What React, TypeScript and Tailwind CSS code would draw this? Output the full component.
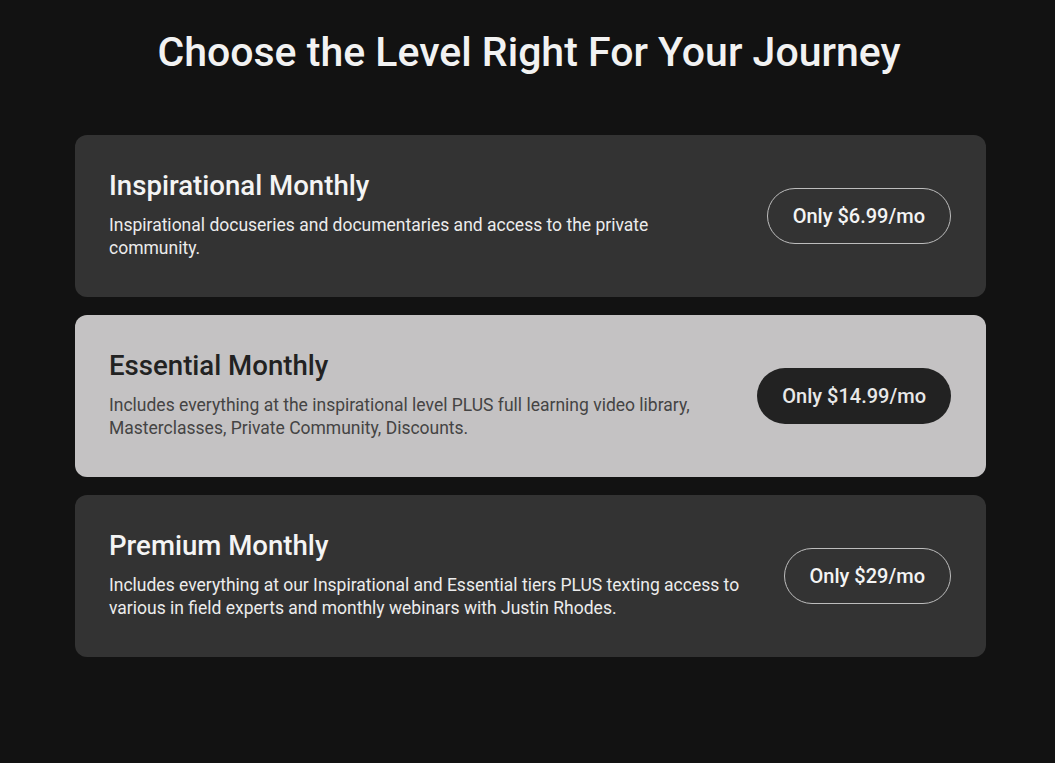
import React from "react";

interface Plan {
  name: string;
  description: string;
  price: string;
  highlighted?: boolean;
}

const plans: Plan[] = [
  {
    name: "Inspirational Monthly",
    description:
      "Inspirational docuseries and documentaries and access to the private community.",
    price: "Only $6.99/mo",
  },
  {
    name: "Essential Monthly",
    description:
      "Includes everything at the inspirational level PLUS full learning video library, Masterclasses, Private Community, Discounts.",
    price: "Only $14.99/mo",
    highlighted: true,
  },
  {
    name: "Premium Monthly",
    description:
      "Includes everything at our Inspirational and Essential tiers PLUS texting access to various in field experts and monthly webinars with Justin Rhodes.",
    price: "Only $29/mo",
  },
];

export default function App() {
  return (
    <div className="min-h-[763px] w-full bg-[#121212] pt-[28px] pb-[106px] font-['Roboto',sans-serif]">
      <h1 className="ml-[3px] text-center text-[41px] leading-[48px] font-medium text-[#f2f2f2]">
        Choose the Level Right For Your Journey
      </h1>
      <div className="ml-[75px] mt-[59px] flex w-[911px] flex-col gap-[18px]">
        {plans.map((p) => (
          <div
            key={p.name}
            className={
              "flex h-[162px] items-center gap-11 rounded-xl pl-[34px] pr-[35px] " +
              (p.highlighted ? "bg-[#c4c2c3]" : "bg-[#333333]")
            }
          >
            <div className="flex-1 pb-[4px]">
              <div
                className={
                  "text-[27.6px] leading-[34px] font-medium " +
                  (p.highlighted ? "text-[#222222]" : "text-[#f4f4f4]")
                }
              >
                {p.name}
              </div>
              <div
                className={
                  "mt-[11px] text-[17.5px] leading-[23px] " +
                  (p.highlighted ? "text-[#444444]" : "text-[#ececec]")
                }
              >
                {p.description}
              </div>
            </div>
            <button
              className={
                "h-[56px] shrink-0 rounded-full px-[25px] text-[20px] font-medium " +
                (p.highlighted
                  ? "bg-[#222222] text-[#e8e8e8]"
                  : "border border-[#bdbdbd] text-[#f4f4f4]")
              }
            >
              {p.price}
            </button>
          </div>
        ))}
      </div>
    </div>
  );
}
